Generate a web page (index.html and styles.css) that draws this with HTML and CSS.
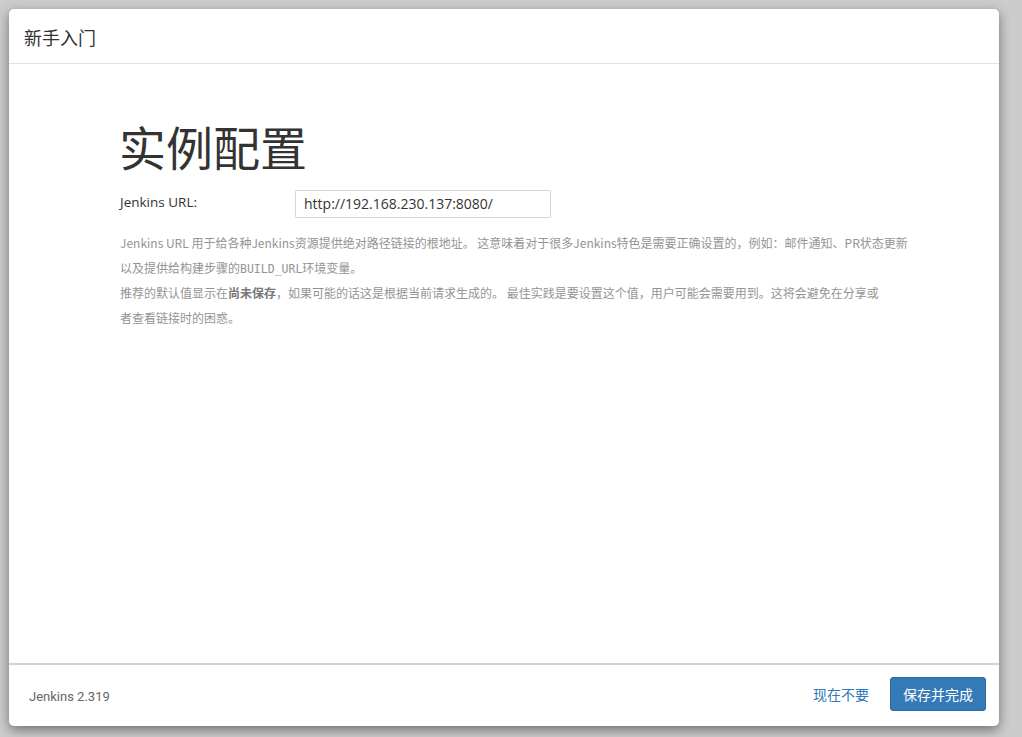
FILE: index.html
```html
<!DOCTYPE html>
<html lang="zh-CN">
<head>
<meta charset="utf-8">
<title>新手入门</title>
<link rel="stylesheet" href="styles.css">
</head>
<body>
<div class="modal">
  <div class="modal-header">
    <h4 class="modal-title">新手入门</h4>
  </div>
  <div class="modal-body">
    <h1 class="page-title">实例配置</h1>
    <div class="form-row">
      <label class="form-label" for="url">Jenkins URL:</label>
      <input class="form-input" id="url" type="text" value="http://192.168.230.137:8080/">
    </div>
    <div class="help-block">
      <p class="help-line">Jenkins URL 用于给各种Jenkins资源提供绝对路径链接的根地址。 这意味着对于很多Jenkins特色是需要正确设置的，例如：邮件通知、PR状态更新<br>以及提供给构建步骤的<code class="mono">BUILD_URL</code>环境变量。</p>
      <p class="help-line">推荐的默认值显示在<strong class="strong">尚未保存</strong>，如果可能的话这是根据当前请求生成的。 最佳实践是要设置这个值，用户可能会需要用到。这将会避免在分享或<br>者查看链接时的困惑。</p>
    </div>
  </div>
  <div class="modal-footer">
    <span class="version">Jenkins 2.319</span>
    <div class="actions">
      <a class="btn-link" href="#">现在不要</a>
      <button class="btn-primary" type="button">保存并完成</button>
    </div>
  </div>
</div>
</body>
</html>
```
FILE: styles.css
```css
html, body {
  margin: 0;
  padding: 0;
  height: 100%;
}
body {
  background: #cccccc;
  font-family: "Open Sans", "Noto Sans CJK SC", sans-serif;
  color: #333;
  padding: 9px 23px 11px 9px;
  box-sizing: border-box;
}
.modal {
  background: #fff;
  height: 717px;
  border-radius: 5px;
  box-shadow: 0 4px 12px rgba(0, 0, 0, 0.45);
  display: flex;
  flex-direction: column;
  overflow: hidden;
}
.modal-header {
  height: 54px;
  border-bottom: 1px solid #e2e2e2;
  display: flex;
  align-items: center;
  padding: 0 15px;
  flex: none;
}
.modal-title {
  margin: 0;
  font-family: "Noto Sans CJK SC", sans-serif;
  font-size: 18px;
  font-weight: normal;
  color: #333;
  line-height: 1;
  padding-top: 1px;
}
.modal-body {
  flex: 1;
  padding: 56px 40px 0 110px;
}
.page-title {
  margin: 0 0 18px;
  font-family: "Noto Sans CJK SC", sans-serif;
  font-size: 47px;
  font-weight: normal;
  line-height: 1.1;
  color: #333;
}
.form-row {
  display: flex;
  align-items: flex-start;
}
.form-label {
  width: 176px;
  flex: none;
  font-size: 13.5px;
  line-height: 20px;
  padding-top: 2px;
  padding-left: 1px;
  box-sizing: border-box;
  color: #333;
}
.form-input {
  width: 256px;
  height: 28px;
  box-sizing: border-box;
  border: 1px solid #d6d6d6;
  border-radius: 1px;
  padding: 0 8px;
  font-family: "Open Sans", sans-serif;
  font-size: 14px;
  color: #333;
  outline: none;
}
.help-block {
  margin-top: 12px;
  padding-left: 1px;
  font-family: "Noto Sans CJK SC", sans-serif;
  font-size: 12px;
  color: #949494;
}
.help-line {
  margin: 0;
  line-height: 25px;
}
.mono {
  font-family: "DejaVu Sans Mono", monospace;
  font-size: 11.5px;
  line-height: 1;
}
.strong {
  font-weight: bold;
  color: #777;
  line-height: 1;
}
.modal-footer {
  flex: none;
  height: 61px;
  border-top: 2px solid #d2d2d2;
  display: flex;
  align-items: center;
  justify-content: space-between;
  padding: 0 13px 0 20px;
}
.version {
  font-family: Roboto, sans-serif;
  font-size: 13px;
  color: #666;
  padding-top: 2px;
}
.actions {
  display: flex;
  align-items: center;
  gap: 21px;
  margin-bottom: 3px;
}
.btn-link {
  font-family: "Noto Sans CJK SC", sans-serif;
  font-size: 14px;
  color: #3077b8;
  text-decoration: none;
}
.btn-primary {
  font-family: "Noto Sans CJK SC", sans-serif;
  font-size: 14px;
  line-height: 20px;
  color: #fff;
  background: #337ab7;
  border: 1px solid #2e6da4;
  border-radius: 3px;
  padding: 6px 12px;
  cursor: pointer;
}
```
